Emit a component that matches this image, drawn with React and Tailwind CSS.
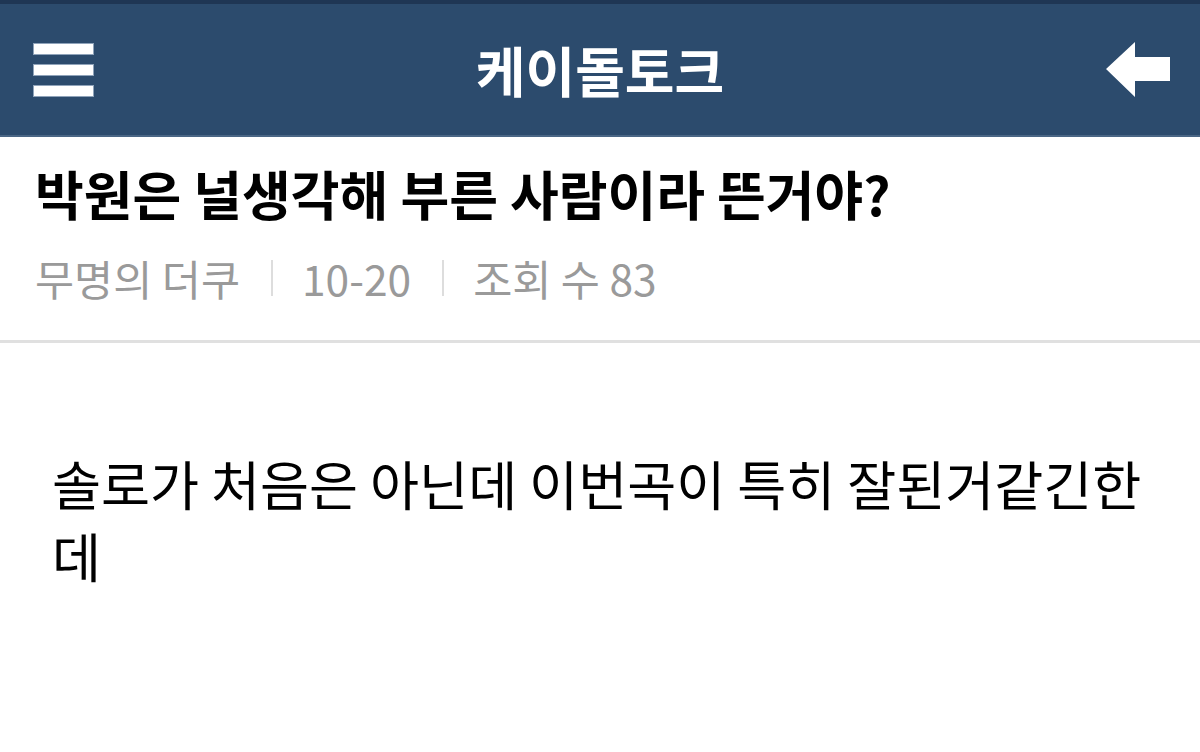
const FONT = '"Noto Sans CJK KR", "Noto Sans", sans-serif'

function MenuIcon() {
  return (
    <div className="flex flex-col gap-[9px]">
      <span className="block w-[61px] h-[12px] bg-white border border-[#8fa3ba]" />
      <span className="block w-[61px] h-[12px] bg-white border border-[#8fa3ba]" />
      <span className="block w-[61px] h-[12px] bg-white border border-[#8fa3ba]" />
    </div>
  )
}

function BackArrow() {
  return (
    <svg width="64" height="56" viewBox="0 0 64 56">
      <path d="M0 27 L29 0 L29 15 L64 15 L64 39 L29 39 L29 55 Z" fill="#fff" />
    </svg>
  )
}

export default function App() {
  return (
    <div className="w-[1200px] h-[752px] bg-white overflow-hidden" style={{ fontFamily: FONT }}>
      {/* Top bar */}
      <header className="h-[137px] bg-[#2c4b6d] border-t-[4px] border-[#1f3654] border-b-[2px] border-b-[#4a6685] flex items-center justify-between pl-[33px] pr-[30px]">
        <MenuIcon />
        <h1 className="text-white font-bold text-[54px] leading-none">케이돌토크</h1>
        <BackArrow />
      </header>

      {/* Post header */}
      <div className="px-[35px] pt-[24px] pb-[34px] border-b-[3px] border-[#e0e0e0]">
        <h2 className="text-black font-bold text-[53px] leading-[64px]">
          박원은 널생각해 부른 사람이라 뜬거야?
        </h2>
        <div className="mt-[25px] flex items-center text-[#9a9a9a] text-[42.5px] leading-[56px]">
          <span>무명의 더쿠</span>
          <span className="ml-[31px] mr-[29px] w-[2px] h-[36px] bg-[#dddddd]" />
          <span>10-20</span>
          <span className="ml-[31px] mr-[29px] w-[2px] h-[36px] bg-[#dddddd]" />
          <span>조회 수 83</span>
        </div>
      </div>

      {/* Post body */}
      <div className="pl-[52px] pr-[50px] pt-[104px]">
        <p className="text-black text-[53.3px] leading-[72px]">
          솔로가 처음은 아닌데 이번곡이 특히 잘된거같긴한데
        </p>
      </div>
    </div>
  )
}
